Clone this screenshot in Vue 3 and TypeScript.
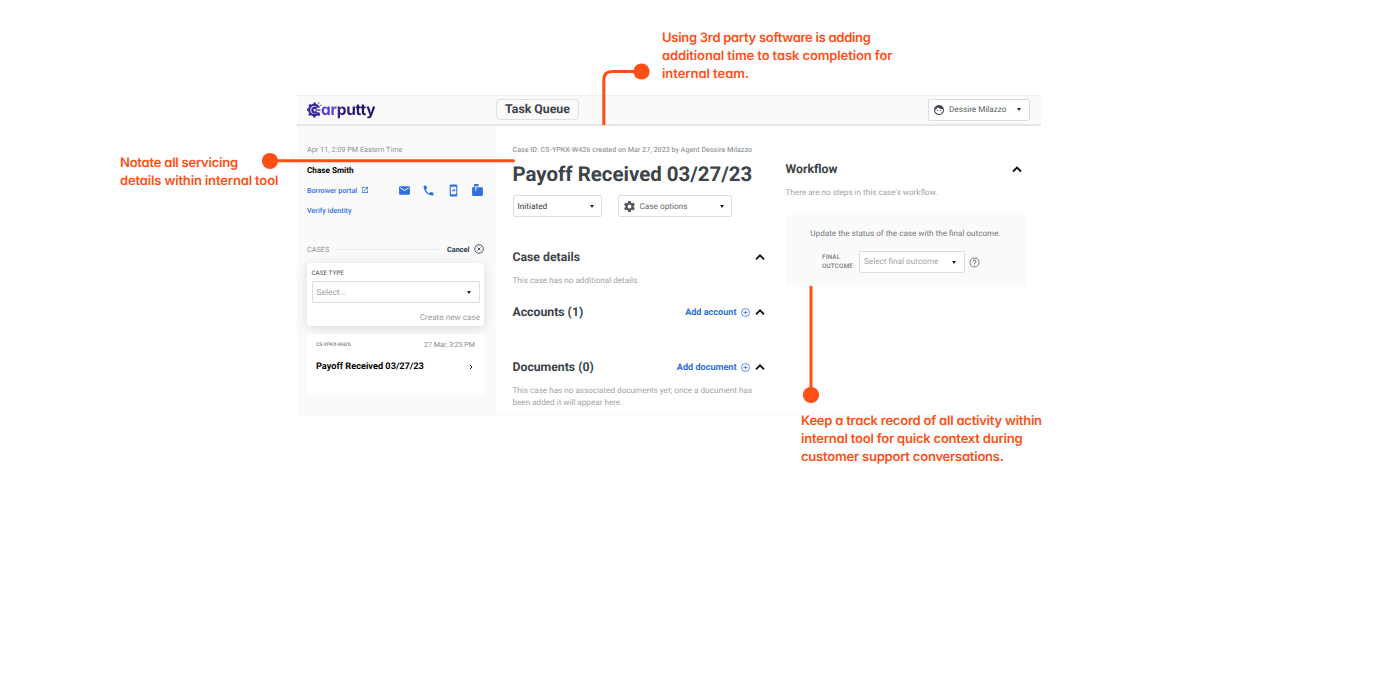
<script setup lang="ts">
interface Section {
  title: string
  action?: string
  body?: string[]
}

const sections: Section[] = [
  { title: 'Case details', body: ['This case has no additional details.'] },
  { title: 'Accounts (1)', action: 'Add account' },
  {
    title: 'Documents (0)',
    action: 'Add document',
    body: ['This case has no associated documents yet; once a document has', 'been added it will appear here.'],
  },
]
</script>

<template>
  <div class="stage">
    <div class="app">
      <header class="topbar">
        <div class="logo">
          <svg class="gear" width="17" height="18" viewBox="0 0 17 18">
            <g fill="none" stroke="#35249a">
              <circle cx="7.400" cy="9" r="5.200" stroke-width="2.200" stroke-dasharray="27 5.700" transform="rotate(28 7.400 9)" />
              <circle cx="7.400" cy="9" r="6.700" stroke-width="1.600" stroke-dasharray="2.300 2.960 2.300 2.960 2.300 2.960 2.300 2.960 2.300 2.960 2.300 2.960 0 11" transform="rotate(36 7.400 9)" />
              <path d="M9.800 7.500A2.500 2.500 0 1 0 9.800 10.700" stroke-width="2.300" />
              <path d="M8.400 9.100H13.500" stroke="#5144d4" stroke-width="1.500" />
              <path d="M11.300 3l1-1.700M12.800 4.800l1.700-.9" stroke="#5144d4" stroke-width="1" />
            </g>
          </svg>
          <span class="wordmark">arputty</span>
        </div>
        <div class="queue">Task Queue</div>
        <div class="user box">
          <svg width="12" height="12" viewBox="0 0 24 24" fill="#444a50">
            <path d="M10.25 13a1.25 1.25 0 1 1-2.5 0 1.25 1.25 0 0 1 2.5 0zM15 11.75a1.25 1.25 0 1 0 0 2.5 1.25 1.25 0 0 0 0-2.5zM22 12c0 5.52-4.48 10-10 10S2 17.520 2 12 6.480 2 12 2s10 4.480 10 10zm-2 0c0-.78-.12-1.530-.33-2.240-.7.150-1.420.240-2.170.240-3.130 0-5.920-1.440-7.760-3.690A10 10 0 0 1 4 11.870V12c0 4.410 3.590 8 8 8s8-3.590 8-8z" />
          </svg>
          <span class="user-name">Dessire Milazzo</span>
          <i class="caret"></i>
        </div>
      </header>
      <div class="body">
        <aside class="side">
          <div class="row date"><span>Apr 11, 2:09 PM Eastern Time</span></div>
          <div class="row name"><span>Chase Smith</span></div>
          <div class="row link">
            <span class="portal">Borrower portal</span>
            <svg class="open" width="8" height="8" viewBox="0 0 24 24" fill="#2f6fe0">
              <path d="M19 19H5V5h7V3H3v18h18v-9h-2zM14 3v2h3.600l-9.800 9.800 1.400 1.400L19 6.400V10h2V3z" />
            </svg>
            <div class="contact">
              <svg width="13" height="13" viewBox="0 0 24 24"><path d="M20 4H4a2 2 0 0 0-2 2v12a2 2 0 0 0 2 2h16a2 2 0 0 0 2-2V6a2 2 0 0 0-2-2zm0 4-8 5-8-5V6l8 5 8-5z" /></svg>
              <svg width="13" height="13" viewBox="0 0 24 24"><path d="M20 15.500c-1.250 0-2.450-.2-3.570-.57a1 1 0 0 0-1.020.24l-2.200 2.200a15.050 15.050 0 0 1-6.590-6.590l2.200-2.210a.96.96 0 0 0 .25-1A11.360 11.360 0 0 1 8.500 4a1 1 0 0 0-1-1H4a1 1 0 0 0-1 1c0 9.390 7.610 17 17 17a1 1 0 0 0 1-1v-3.500a1 1 0 0 0-1-1z" /></svg>
              <svg width="13" height="13" viewBox="0 0 24 24"><path d="M7 1h10a2 2 0 0 1 2 2v18a2 2 0 0 1-2 2H7a2 2 0 0 1-2-2V3a2 2 0 0 1 2-2zm0 4v14h10V5z" fill-rule="evenodd" /><path d="M8.500 15c0-3 1.500-4.500 4-4.500V8.500l3.500 3-3.500 3v-2c-1.800 0-3 .7-4 2.500z" /></svg>
              <svg width="13" height="13" viewBox="0 0 24 24"><path d="M20 6H10v6H8V4h6V0H6v6H4a2 2 0 0 0-2 2v12a2 2 0 0 0 2 2h16a2 2 0 0 0 2-2V8a2 2 0 0 0-2-2z" /></svg>
            </div>
          </div>
          <div class="row link verify"><span>Verify identity</span></div>
          <div class="cases">
            <span class="cases-label">CASES</span>
            <i class="rule"></i>
            <span class="cancel">Cancel</span>
            <svg width="10" height="10" viewBox="0 0 10 10" fill="none" stroke="#3c4248" stroke-width=".9">
              <circle cx="5" cy="5" r="4.300" /><path d="M3.500 3.500l3 3M6.500 3.500L3.500 6.500" />
            </svg>
          </div>
          <div class="card new-case">
            <div class="label">CASE TYPE</div>
            <div class="box select"><span class="ph-select">Select...</span><i class="caret"></i></div>
            <div class="create"><span>Create new case</span></div>
          </div>
          <div class="card case-item">
            <div class="case-top"><span class="case-id">CS-YPKX-W426</span><span class="case-date">27 Mar, 3:25 PM</span></div>
            <div class="case-main">
              <span class="case-title">Payoff Received 03/27/23</span>
              <svg width="4" height="6" viewBox="0 0 4 6" fill="none" stroke="#222" stroke-width="1"><path d="M.8.800L3 3 .8 5.200" /></svg>
            </div>
          </div>
        </aside>

        <main class="main">
          <div class="meta"><span>Case ID: CS-YPKX-W426 created on Mar 27, 2023 by Agent Dessire Milazzo</span></div>
          <h1><span>Payoff Received 03/27/23</span></h1>
          <div class="controls">
            <div class="box status"><span class="st">Initiated</span><i class="caret"></i></div>
            <div class="box options">
              <svg width="11" height="11" viewBox="2 2 20 20" fill="#50565b">
                <path d="M19.430 12.980c.04-.32.07-.64.07-.98s-.03-.66-.07-.98l2.110-1.650a.5.5 0 0 0 .12-.64l-2-3.460a.5.5 0 0 0-.61-.22l-2.490 1a7.300 7.300 0 0 0-1.690-.98l-.38-2.650A.49.49 0 0 0 14 2h-4a.49.49 0 0 0-.49.42l-.38 2.650c-.61.25-1.170.59-1.690.98l-2.490-1a.49.49 0 0 0-.61.220l-2 3.460a.49.49 0 0 0 .12.640l2.110 1.650a7.900 7.900 0 0 0 0 1.960l-2.110 1.650a.5.5 0 0 0-.12.640l2 3.460c.12.220.390.300.610.220l2.490-1c.52.400 1.080.730 1.690.980l.38 2.650c.3.240.24.420.49.420h4c.25 0 .46-.18.49-.42l.38-2.650a7.700 7.700 0 0 0 1.690-.98l2.490 1c.23.090.490 0 .61-.22l2-3.460a.5.5 0 0 0-.12-.64zM12 15.500a3.500 3.500 0 1 1 0-7 3.500 3.500 0 0 1 0 7z" />
              </svg>
              <span class="opt">Case options</span><i class="caret"></i>
            </div>
          </div>
          <section v-for="s in sections" :key="s.title" class="section">
            <div class="section-head">
              <h2>{{ s.title }}</h2>
              <div v-if="s.action" class="action">
                <span>{{ s.action }}</span>
                <svg width="9" height="9" viewBox="0 0 9 9" fill="none" stroke="#3b74e4" stroke-width=".8"><circle cx="4.500" cy="4.500" r="4" /><path d="M4.500 2.400v4.200M2.400 4.500h4.200" /></svg>
              </div>
              <svg class="chev" width="10" height="7" viewBox="0 0 10 7" fill="none" stroke="#111" stroke-width="1.800"><path d="M1 5.300l4-4 4 4" /></svg>
            </div>
            <div v-if="s.body" class="section-body">
              <div v-for="line in s.body" :key="line">{{ line }}</div>
            </div>
          </section>
        </main>

        <section class="workflow">
          <div class="section-head">
            <h2>Workflow</h2>
            <svg class="chev" width="10" height="7" viewBox="0 0 10 7" fill="none" stroke="#111" stroke-width="1.800"><path d="M1 5.500l4-4 4 4" /></svg>
          </div>
          <div class="none"><span>There are no steps in this case's workflow.</span></div>
          <div class="outcome">
            <div class="prompt"><span>Update the status of the case with the final outcome.</span></div>
            <div class="outcome-row">
              <div class="outcome-label">FINAL<br />OUTCOME</div>
              <div class="box final"><span class="ph">Select final outcome</span><i class="caret"></i></div>
              <svg width="11" height="11" viewBox="1 1 22 22" fill="#7d8286"><path d="M11 18h2v-2h-2zm1-16a10 10 0 1 0 0 20 10 10 0 0 0 0-20zm0 18a8 8 0 1 1 0-16 8 8 0 0 1 0 16zm0-14a4 4 0 0 0-4 4h2a2 2 0 1 1 4 0c0 2-3 1.750-3 5h2c0-2.250 3-2.500 3-5a4 4 0 0 0-4-4z" /></svg>
            </div>
          </div>
        </section>
      </div>
    </div>

    <svg class="leaders" width="1400" height="697" viewBox="0 0 1400 697" fill="none" stroke="#ff4f17" stroke-width="3" stroke-linecap="round">
      <path d="M270 160.700H513.500" />
      <path d="M641 71.500H612Q603.800 71.500 603.800 80V125" stroke-linecap="butt" />
      <path d="M811 287V394" />
      <g fill="#ff4f17" stroke="none">
        <circle cx="270" cy="161" r="8.100" /><circle cx="641.500" cy="71.500" r="8.100" /><circle cx="811" cy="395" r="8.100" />
      </g>
    </svg>
    <div class="note note-left"><div class="n1">Notate all servicing</div><div class="n2">details within internal tool</div></div>
    <div class="note note-top"><div class="n3">Using 3rd party software is adding</div><div class="n4">additional time to task completion for</div><div class="n5">internal team.</div></div>
    <div class="note note-bottom"><div class="n6">Keep a track record of all activity within</div><div class="n7">internal tool for quick context during</div><div class="n8">customer support conversations.</div></div>
  </div>
</template>

<style>
body { margin: 0; background: #fff; }
</style>

<style scoped>
* { box-sizing: border-box; }
.stage { position: relative; width: 1400px; height: 697px; overflow: hidden; background: #fff; padding: 95px 0 0 297px; font-family: Roboto, "Liberation Sans", sans-serif; text-rendering: geometricPrecision; }
.app { width: 744px; height: 321px; background: linear-gradient(#fff 0 314px, #fafafa 321px); color: #3c4349; }
.topbar { height: 29px; display: flex; align-items: center; background: #fafafa; border-top: 1px solid #f0f0f0; padding: 0 11px 1px 10px; }
.logo { display: flex; align-items: center; width: 189px; height: 28px; }
.gear { margin-right: -3px; }
.wordmark { font: 700 15.500px/20px Inter, sans-serif; font-feature-settings: "cv11"; letter-spacing: -.25px; background: linear-gradient(90deg, #4f42d2 0 26%, #2f1c85 34%, #25125f); background-clip: text; color: transparent; }
.queue { height: 21px; width: 83px; border: 1px solid #dfe0e2; border-radius: 4px; font-weight: 700; font-size: 12.300px; line-height: 20.500px; text-align: center; white-space: nowrap; }
.box { display: flex; align-items: center; background: #fff; border: 1px solid #dcdddf; border-radius: 2px; height: 22px; white-space: nowrap; }
.box > span { padding-top: 1px; }
.caret { width: 0; height: 0; border: 2.500px solid transparent; border-top: 3px solid #222; border-bottom: 0; margin-left: auto; }
.user { margin-left: auto; width: 102px; padding: 0 8px 0 4px; font-size: 8.200px; color: #555b60; }
.user > .user-name { margin-left: 4px; padding-top: 0; }
.body { display: flex; height: 292px; border-top: 2px solid #e6e6e6; }
.side { width: 199px; background: #fafafa; padding: 14px 12px 0 10px; }
.row { height: 20px; display: flex; align-items: center; white-space: nowrap; }
.date { color: #8f9397; font-size: 7.250px; padding-bottom: 1px; }
.name { color: #000; font-weight: 700; font-size: 8.200px; padding-top: 1px; }
.link { color: #2f6fe0; font-weight: 500; font-size: 7.200px; }
.verify { padding-bottom: 0; }
.open { margin-left: 4px; }
.contact { display: flex; gap: 11.500px; margin-left: auto; fill: #2f6fe0; }
.cases { display: flex; align-items: center; height: 20px; margin-top: 19px; font-size: 7.300px; color: #8f9397; }
.rule { flex: 1; height: 1px; background: #eaeaea; margin: 0 7px 0 8px; }
.cancel { color: #2f353a; font-weight: 700; margin-right: 4.500px; }
.card { background: #fff; border-radius: 3px; width: 177px; }
.new-case { margin-top: 4px; height: 63px; padding: 5px 4px 0 4.500px; box-shadow: 0 2px 12px #0002; }
.label { font-size: 6.300px; line-height: 11px; font-weight: 500; color: #6c7176; }
.select { margin-top: 2px; width: 168px; padding: 0 8px 0 4px; font-size: 8.400px; color: #999da1; }
.create { text-align: right; font-size: 8.200px; line-height: 14px; margin-top: 8px; color: #999da1; }
.case-item { margin-top: 8px; height: 61px; padding: 4px 9px 0 9px; }
.case-top { display: flex; justify-content: space-between; align-items: center; height: 12px; color: #85898d; font-size: 7.100px; }
.case-id { font-size: 5.100px; color: #555; padding-top: 1px; }
.case-main { display: flex; justify-content: space-between; align-items: center; margin-top: 9px; height: 15px; color: #000; font-weight: 700; font-size: 9.200px; padding-right: 2px; }
.main { width: 289.500px; padding: 14px 22px 0 16.500px; white-space: nowrap; }
.meta { font-size: 7.130px; line-height: 19px; font-weight: 500; color: #989ca0; }
h1 { margin: 2px 0 0; font-size: 20.450px; line-height: 26px; font-weight: 700; }
h2 { margin: 0; font-size: 12.250px; line-height: 20px; font-weight: 700; }
.controls { display: flex; gap: 16px; margin-top: 8px; font-size: 8.250px; }
.status { width: 89.500px; padding: 0 7.500px 0 4px; color: #33383c; }
.options { width: 114px; padding: 0 7.500px 0 5px; color: #666b70; }
.opt { margin-left: 4.500px; }
.section { height: 55px; }
.section:first-of-type { margin-top: 30px; }
.section-head { display: flex; align-items: center; height: 20px; }
.action { display: flex; align-items: center; gap: 4.500px; margin-left: auto; color: #2f6fe0; font-weight: 700; font-size: 9.100px; }
.action span { padding-top: 1px; }
.chev { margin-left: auto; }
.action + .chev { margin-left: 5px; }
.main .chev { margin-right: -1.500px; }
.section-body { margin-top: 7px; font-size: 8.130px; line-height: 12px; color: #a0a4a7; }
.workflow { width: 240px; padding-top: 33px; white-space: nowrap; }
.workflow .chev { margin-right: 4px; }
.none { font-size: 8.150px; line-height: 12px; margin-top: 7px; color: #a0a4a7; }
.outcome { margin-top: 16.500px; height: 70px; background: #fafafa; padding-top: 12.500px; }
.prompt { font-size: 8.150px; line-height: 12px; text-align: center; color: #74797d; }
.outcome-row { display: flex; align-items: center; margin: 12px 0 0 36.500px; }
.outcome-label { width: 37px; font-size: 6.300px; line-height: 9px; font-weight: 500; color: #777c80; letter-spacing: .2px; }
.final { width: 106px; padding: 0 8px 0 4px; margin-right: 4px; font-size: 8.200px; color: #a0a4a7; }
.final > span { padding-top: 0; }
.leaders { position: absolute; left: 0; top: 0; }
.note { position: absolute; font: 600 13px/18px Inter, sans-serif; font-feature-settings: "cv11"; color: #ff4f17; white-space: nowrap; }
.note-left { left: 120px; top: 154px; }
.note-top { left: 662px; top: 29px; }
.note-bottom { left: 801px; top: 412px; }
.n1 { letter-spacing: -.22px; }
.n2 { letter-spacing: -.15px; }
.n3 { letter-spacing: -.28px; }
.n4 { letter-spacing: -.11px; }
.n5 { letter-spacing: -.05px; }
.n6 { letter-spacing: -.22px; }
.n7 { letter-spacing: -.2px; }
.n8 { letter-spacing: -.21px; }
</style>
